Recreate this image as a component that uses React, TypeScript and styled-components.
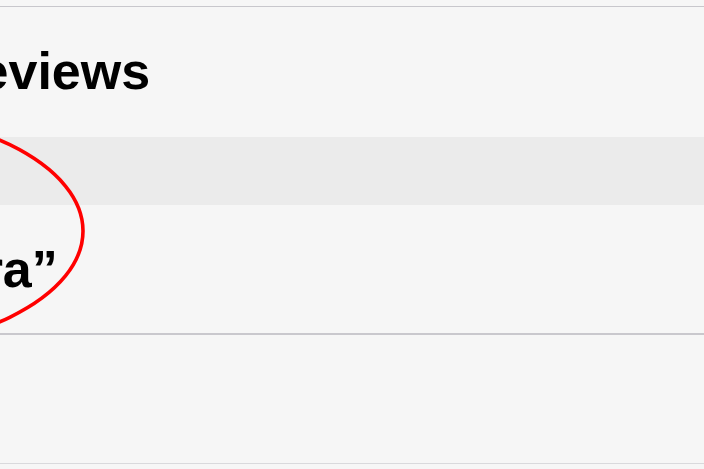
import React from "react";
import styled, { createGlobalStyle } from "styled-components";

const GlobalStyle = createGlobalStyle`
  html, body {
    margin: 0;
    padding: 0;
    background: #f6f6f6;
  }
  body {
    font-family: "Liberation Sans", Arial, Helvetica, sans-serif;
    color: #000;
  }
`;

export default function App() {
  return (
    <>
      <GlobalStyle />
      <Page>
        <TopGap />
        <Section>
          <TitleRow>
            <Title>Reviews</Title>
          </TitleRow>
          <Band />
          <QuoteRow>
            <Quote>“Camera”</Quote>
          </QuoteRow>
          <EmptyRow />
        </Section>

        {/* red annotation circle drawn over the list */}
        <Annotation width="704" height="469" viewBox="0 0 704 469">
          <ellipse cx={-167} cy={231} rx={250} ry={122} fill="none" stroke="#ff0000" strokeWidth={3.6} />
        </Annotation>
      </Page>
    </>
  );
}

const Page = styled.div`
  position: relative;
  width: 704px;
  height: 469px;
  overflow: hidden;
  background: #f6f6f6;
`;

const TopGap = styled.div`
  height: 6px;
`;

const Section = styled.div`
  border-top: 1px solid #c8c7cc;
  display: flex;
  flex-direction: column;
`;

const TitleRow = styled.div`
  height: 130px;
  box-sizing: border-box;
  padding-top: 38px;
`;

const Title = styled.h1`
  margin: 0 0 0 -58px;
  font-size: 52px;
  line-height: 52px;
  font-weight: 700;
  white-space: nowrap;
`;

const Band = styled.div`
  height: 68px;
  background: #ebebeb;
`;

const QuoteRow = styled.div`
  height: 130px;
  box-sizing: border-box;
  padding-top: 38px;
  border-bottom: 2px solid #c9c8cd;
`;

const Quote = styled.p`
  margin: 0 0 0 -185px;
  font-size: 52px;
  line-height: 52px;
  font-weight: 700;
  white-space: nowrap;
`;

const EmptyRow = styled.div`
  height: 128px;
  border-bottom: 1px solid #d9d9dc;
`;

const Annotation = styled.svg`
  position: absolute;
  left: 0;
  top: 0;
  pointer-events: none;
`;
